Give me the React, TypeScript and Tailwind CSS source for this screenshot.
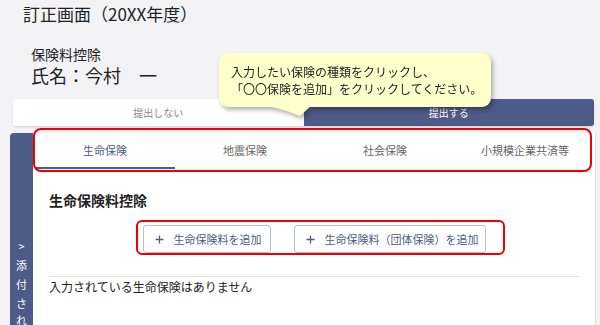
import React from "react";

const tabs = ["生命保険", "地震保険", "社会保険", "小規模企業共済等"];

function PlusMark() {
  return (
    <svg width="9" height="9" viewBox="0 0 9 9" className="shrink-0">
      <path d="M4.5 0.5v8M0.5 4.5h8" stroke="#4e5a87" strokeWidth="1.3" />
    </svg>
  );
}

function SubmitToggle() {
  return (
    <div className="ml-[13px] mt-[12px] flex h-[27px] w-[581px] overflow-hidden rounded-[3px] text-[10px] shadow-[0_1px_2px_rgba(0,0,0,0.15)]">
      <div className="flex flex-1 items-center justify-center bg-white text-[#888]">
        提出しない
      </div>
      <div className="flex flex-1 items-center justify-center bg-[#4e5a87] text-white">
        提出する
      </div>
    </div>
  );
}

function Sidebar() {
  return (
    <div className="flex w-[23px] flex-col items-center rounded-tl-[4px] bg-[#4e5a87] pt-[104px] text-[11px] leading-[19px] text-white">
      <span>&gt;</span>
      <span>添</span>
      <span>付</span>
      <span>さ</span>
      <span className="leading-[14px]">れ</span>
    </div>
  );
}

function Panel() {
  return (
    <div className="flex flex-1 flex-col border-r border-[#dcdcdc] bg-white">
      <div className="flex pl-[2px]">
        {tabs.map((t, i) => (
          <div
            key={t}
            className={
              i === 0
                ? "flex h-[36px] w-[140px] items-center justify-center border-b-2 border-[#4e5a87] text-[11px] text-[#4e5a87]"
                : "flex h-[36px] w-[140px] items-center justify-center border-b-2 border-transparent text-[11px] text-[#666]"
            }
          >
            {t}
          </div>
        ))}
      </div>
      <div className="px-[16px]">
        <div className="mt-[21px] text-[14px] font-bold leading-[20px] text-[#222]">
          生命保険料控除
        </div>
        <div className="mt-[15px] flex justify-center gap-[23px]">
          <button className="flex h-[28px] w-[128px] items-center gap-[10px] rounded-[3px] border border-[#b9bed0] bg-white pl-[11px] text-[11px] text-[#4e5a87]">
            <PlusMark />
            生命保険料を追加
          </button>
          <button className="flex h-[28px] w-[192px] items-center gap-[10px] rounded-[3px] border border-[#b9bed0] bg-white pl-[11px] text-[11px] text-[#4e5a87]">
            <PlusMark />
            生命保険料（団体保険）を追加
          </button>
        </div>
        <div className="mt-[23px] border-t border-[#e3e3e3] pt-[2px] text-[12px] leading-[16px] text-[#222]">
          入力されている生命保険はありません
        </div>
      </div>
    </div>
  );
}

function Tooltip() {
  return (
    <div className="absolute left-[219px] top-[53px] drop-shadow-[2px_3px_2px_rgba(0,0,0,0.3)]">
      <div className="relative h-[54px] w-[272px] rounded-[9px] bg-[#ffffcc] pl-[12px] pt-[10px] text-[12px] leading-[17px] text-[#222]">
        <div>入力したい保険の種類をクリックし、</div>
        <div>「〇〇保険を追加」をクリックしてください。</div>
        <svg
          width="60"
          height="14"
          viewBox="0 0 60 14"
          className="absolute left-[36px] top-[51px]"
        >
          <path d="M0 0 C20 3 34 7 45 12 L58 0 Z" fill="#ffffcc" />
        </svg>
      </div>
    </div>
  );
}

export default function App() {
  return (
    <div className="relative h-[325px] w-[600px] overflow-hidden bg-[#f3f3f6] font-['Noto_Sans_CJK_JP',sans-serif] text-[#222]">
      <div className="pl-[23px] pt-[2px] text-[17px] leading-[24px]">
        訂正画面（20XX年度）
      </div>
      <div className="mt-[19px] pl-[31px]">
        <div className="text-[14px] leading-[18px]">保険料控除</div>
        <div className="text-[18px] leading-[24px]">氏名：今村　一</div>
      </div>
      <SubmitToggle />
      <div className="ml-[10px] mr-[4px] mt-[7px] flex h-[192px]">
        <Sidebar />
        <Panel />
      </div>

      {/* red annotation frames */}
      <div className="pointer-events-none absolute left-[33px] top-[128px] h-[44px] w-[559px] rounded-[8px] border-2 border-[#ee0000]" />
      <div className="pointer-events-none absolute left-[136px] top-[220px] h-[35px] w-[369px] rounded-[6px] border-2 border-[#ee0000]" />

      <Tooltip />
    </div>
  );
}
